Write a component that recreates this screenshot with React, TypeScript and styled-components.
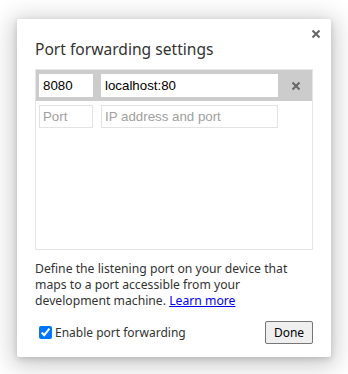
import styled, { createGlobalStyle } from "styled-components";

const GlobalStyle = createGlobalStyle`
  html, body {
    margin: 0;
    padding: 0;
    background: #ffffff;
  }
  body {
    font-family: "Noto Sans", "Open Sans", sans-serif;
  }
`;

const Page = styled.div`
  width: 348px;
  height: 374px;
  padding: 19px 17px 0 17px;
  box-sizing: border-box;
`;

const Dialog = styled.div`
  position: relative;
  width: 314px;
  height: 338px;
  background: #ffffff;
  border-radius: 2px;
  box-shadow: 0 4px 23px 5px rgba(0, 0, 0, 0.2), 0 2px 6px rgba(0, 0, 0, 0.15);
  padding: 19px 18px 0 18px;
  box-sizing: border-box;
  display: flex;
  flex-direction: column;
`;

const CloseButton = styled.button`
  position: absolute;
  top: 8px;
  right: 8px;
  width: 14px;
  height: 14px;
  padding: 0;
  border: none;
  background: transparent;
  display: flex;
  align-items: center;
  justify-content: center;
`;

const Title = styled.h1`
  margin: 0 0 9px 0;
  font-size: 15.6px;
  font-weight: 400;
  color: #333333;
  line-height: 22px;
`;

const RuleList = styled.div`
  height: 179px;
  border: 1px solid #e5e5e5;
  display: flex;
  flex-direction: column;
`;

const Row = styled.div<{ $active?: boolean }>`
  display: flex;
  align-items: center;
  height: 31px;
  padding: 0 3px;
  background: ${(p) => (p.$active ? "#cccccc" : "transparent")};
`;

const Field = styled.input<{ $width: number }>`
  width: ${(p) => p.$width}px;
  height: 23px;
  box-sizing: border-box;
  margin-right: 8px;
  padding: 0 3px;
  border: 1px solid ${(p) => (p.readOnly ? "#ffffff" : "#e3e3e3")};
  background: #ffffff;
  font-family: "Liberation Sans", Arial, sans-serif;
  font-size: 13.3px;
  color: #000000;
  outline: none;
  &::placeholder {
    color: #a0a0a0;
  }
`;

const RemoveButton = styled.button`
  margin-left: auto;
  margin-right: 6px;
  width: 14px;
  height: 14px;
  padding: 0;
  border: none;
  background: transparent;
  display: flex;
  align-items: center;
  justify-content: center;
`;

const Description = styled.p`
  margin: 11px 0 0 0;
  font-size: 12.2px;
  line-height: 16px;
  color: #333333;
`;

const Link = styled.a`
  color: #0000ee;
  text-decoration: underline;
`;

const Footer = styled.div`
  display: flex;
  align-items: center;
  justify-content: space-between;
  margin-top: 12px;
`;

const CheckLabel = styled.label`
  display: flex;
  align-items: center;
  gap: 3px;
  margin-left: 4px;
  font-size: 12px;
  color: #333333;
`;

const Check = styled.input`
  margin: 0;
  width: 13px;
  height: 13px;
  accent-color: #0075ff;
`;

const DoneButton = styled.button`
  width: 48px;
  height: 23px;
  padding: 0;
  border: 1px solid #767676;
  border-radius: 2px;
  background: #efefef;
  font-family: "Noto Sans", "Open Sans", sans-serif;
  font-size: 12px;
  color: #000000;
`;

function Cross({ size, stroke }: { size: number; stroke: number }) {
  return (
    <svg width={size} height={size} viewBox="0 0 10 10">
      <path d="M1.5 1.5 L8.5 8.5 M8.5 1.5 L1.5 8.5" stroke="#666666" strokeWidth={stroke} />
    </svg>
  );
}

export default function App() {
  return (
    <>
      <GlobalStyle />
      <Page>
        <Dialog>
          <CloseButton aria-label="Close">
            <Cross size={10} stroke={2} />
          </CloseButton>
          <Title>Port forwarding settings</Title>
          <RuleList>
            <Row $active>
              <Field $width={54} readOnly value="8080" />
              <Field $width={177} readOnly value="localhost:80" />
              <RemoveButton aria-label="Remove">
                <Cross size={10} stroke={2} />
              </RemoveButton>
            </Row>
            <Row>
              <Field $width={54} placeholder="Port" />
              <Field $width={177} placeholder="IP address and port" />
            </Row>
          </RuleList>
          <Description>
            Define the listening port on your device that maps to a port accessible from your
            development machine. <Link href="#">Learn more</Link>
          </Description>
          <Footer>
            <CheckLabel>
              <Check type="checkbox" defaultChecked />
              Enable port forwarding
            </CheckLabel>
            <DoneButton>Done</DoneButton>
          </Footer>
        </Dialog>
      </Page>
    </>
  );
}
